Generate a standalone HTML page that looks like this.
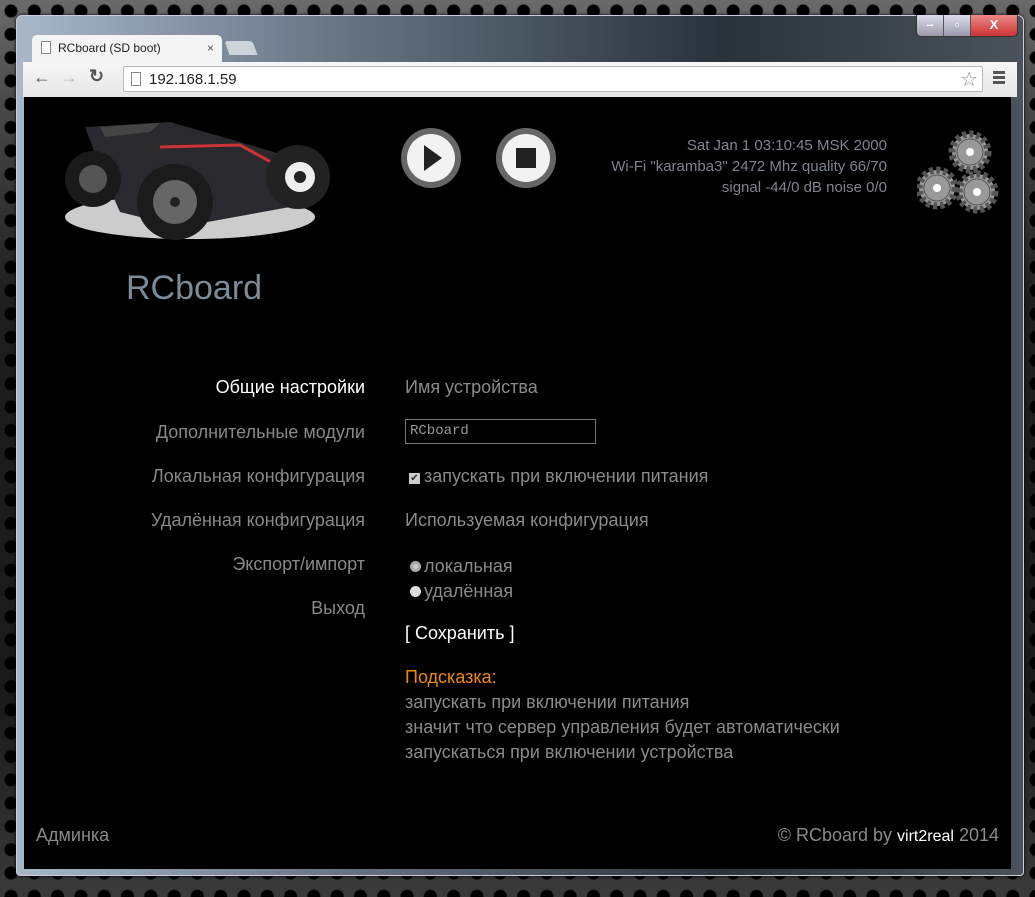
<!DOCTYPE html>
<html><head><meta charset="utf-8"><style>
*{margin:0;padding:0;box-sizing:border-box}
body{width:1035px;height:897px;overflow:hidden;position:relative;font-family:"Liberation Sans Narrow","Liberation Sans","Noto Sans CJK SC",sans-serif;
background:radial-gradient(circle at 11px 11px,#000 0 6px,transparent 7px) 0 0/23.3px 23.3px,linear-gradient(180deg,#6a6a6a 0,#4a4a4a 100px,#1e1e1e 300px,#1a1a1a 700px,#3a3a3a 897px);}
.win{position:absolute;left:16px;top:15px;width:1008px;height:861px;border-radius:6px 6px 4px 4px;border:1px solid #ccd;
background:linear-gradient(90deg,#a8b8c8 0,#6a7888 30%,#2a323c 70%,#4a525c 100%);box-shadow:0 0 3px #000}
.ctl{position:absolute;top:-1px;right:5px;height:22px;display:flex;border:1px solid #333;border-top:none;border-radius:0 0 5px 5px;overflow:hidden}
.ctl div{width:27px;height:21px;background:linear-gradient(#dde,#99a);color:#fff;font:bold 13px "Liberation Sans";text-align:center;line-height:20px;border-right:1px solid #555}
.ctl div.x{width:46px;background:linear-gradient(#e88,#c33);border:none}
.tab{position:absolute;left:15px;top:19px;width:190px;height:28px;background:#f4f4f4;border-radius:5px 5px 0 0;font:12px "Liberation Sans";color:#222;padding:6px 0 0 26px}
.tab2{position:absolute;left:210px;top:25px;width:28px;height:14px;background:#ccd3da;border-radius:3px 3px 0 0;transform:skewX(20deg)}
.bar{position:absolute;left:6px;top:46px;width:994px;height:35px;background:linear-gradient(#f6f6f6,#e6e6e6)}
.url{position:absolute;left:100px;top:4px;width:860px;height:26px;background:#fff;border:1px solid #bbb;border-radius:2px;font:15px "Liberation Sans";color:#222;padding:4px 0 0 25px}
.content{position:absolute;left:7px;top:81px;width:987px;height:772px;background:#000}
.gray{color:#8a8a8a}
.menu{position:absolute;right:646px;text-align:right;font-size:18px;color:#888;white-space:nowrap}
.t{position:absolute;white-space:nowrap}
</style></head><body>
<div class="win">
 <div class="ctl"><div>–</div><div>▫</div><div class="x">X</div></div>
 <div class="tab"><span style="position:absolute;left:9px;top:6px;width:10px;height:13px;border:1px solid #888;background:#fff"></span>RCboard (SD boot)<span style="position:absolute;right:8px;top:6px;color:#555">×</span></div>
 <div class="tab2"></div>
 <div class="bar">
  <span style="position:absolute;left:10px;top:5px;font:bold 18px 'Liberation Sans';color:#555">←</span>
  <span style="position:absolute;left:37px;top:5px;font:bold 18px 'Liberation Sans';color:#bbb">→</span>
  <span style="position:absolute;left:66px;top:4px;font:bold 18px 'Liberation Sans';color:#555">↻</span>
  <div class="url"><span style="position:absolute;left:7px;top:5px;width:10px;height:14px;border:1px solid #888"></span>192.168.1.59<span style="position:absolute;right:4px;top:0;font-size:20px;color:#888">☆</span></div>
  <span style="position:absolute;left:970px;top:9px;width:12px;height:3px;background:#555;box-shadow:0 5px #555,0 10px #555"></span>
 </div>
 <div class="content">
  <svg style="position:absolute;left:36px;top:20px" width="280" height="135" viewBox="0 0 280 135">
   <ellipse cx="130" cy="100" rx="125" ry="22" fill="#ccc"/>
   <path d="M25 10 L110 5 L180 25 L230 40 L240 60 L230 90 L120 110 L60 95 L40 50 Z" fill="#2a2a2e"/>
   <path d="M40 10 L100 6 L90 15 L45 20Z" fill="#444"/>
   <path d="M100 30 L180 28 L220 50" stroke="#c33" stroke-width="3" fill="none"/>
   <circle cx="33" cy="62" r="28" fill="#1a1a1a"/><circle cx="33" cy="62" r="14" fill="#555"/>
   <circle cx="115" cy="85" r="38" fill="#1b1b1b"/><circle cx="115" cy="85" r="22" fill="#666"/><circle cx="115" cy="85" r="5" fill="#222"/>
   <circle cx="238" cy="60" r="32" fill="#222"/><circle cx="240" cy="60" r="15" fill="#eee"/><circle cx="240" cy="60" r="6" fill="#222"/>
  </svg>
  <div class="t" style="left:102px;top:172px;font-size:34px;color:#7d8a98">RCboard</div>
  <svg style="position:absolute;left:376px;top:30px" width="62" height="62"><circle cx="31" cy="31" r="30" fill="#666"/><circle cx="31" cy="31" r="24" fill="#f2f2f2"/><path d="M24 18 L42 31 L24 44Z" fill="#222"/></svg>
  <svg style="position:absolute;left:471px;top:30px" width="62" height="62"><circle cx="31" cy="31" r="30" fill="#666"/><circle cx="31" cy="31" r="24" fill="#f2f2f2"/><rect x="21" y="21" width="20" height="20" fill="#222"/></svg>
  <div class="t" style="right:124px;top:38px;text-align:right;font-size:15px;line-height:21px;color:#7d8390">Sat Jan 1 03:10:45 MSK 2000<br>Wi-Fi "karamba3" 2472 Mhz quality 66/70<br>signal -44/0 dB noise 0/0</div>
  <svg style="position:absolute;left:893px;top:33px" width="85" height="85">
   <g fill="#999" stroke="#555"><circle cx="53" cy="22" r="18" stroke-dasharray="4 3" stroke-width="7"/><circle cx="53" cy="22" r="13"/>
   <circle cx="20" cy="58" r="18" stroke-dasharray="4 3" stroke-width="7"/><circle cx="20" cy="58" r="13"/>
   <circle cx="60" cy="62" r="18" stroke-dasharray="4 3" stroke-width="7"/><circle cx="60" cy="62" r="13"/></g>
   <g fill="#fff"><circle cx="53" cy="22" r="4"/><circle cx="20" cy="58" r="4"/><circle cx="60" cy="62" r="4"/></g>
  </svg>
  <div class="menu" style="top:280px;color:#fff">Общие настройки</div>
  <div class="menu" style="top:325px">Дополнительные модули</div>
  <div class="menu" style="top:369px">Локальная конфигурация</div>
  <div class="menu" style="top:413px">Удалённая конфигурация</div>
  <div class="menu" style="top:457px">Экспорт/импорт</div>
  <div class="menu" style="top:501px">Выход</div>
  <div class="t gray" style="left:381px;top:280px;font-size:18px">Имя устройства</div>
  <div class="t" style="left:381px;top:322px;width:191px;height:25px;border:1px solid #777;font:14px 'Liberation Mono';color:#999;padding:3px 4px">RCboard</div>
  <div class="t gray" style="left:385px;top:369px;font-size:18px"><span style="display:inline-block;width:11px;height:11px;background:#ccc;margin-right:4px;vertical-align:1px;font-size:10px;line-height:11px;color:#333;text-align:center">✔</span>запускать при включении питания</div>
  <div class="t gray" style="left:381px;top:413px;font-size:18px">Используемая конфигурация</div>
  <div class="t gray" style="left:386px;top:457px;font-size:18px;line-height:25px"><span style="display:inline-block;width:11px;height:11px;border-radius:50%;background:#ccc;border:3px solid #aaa;margin-right:3px"></span>локальная<br><span style="display:inline-block;width:11px;height:11px;border-radius:50%;background:#ddd;margin-right:3px"></span>удалённая</div>
  <div class="t" style="left:381px;top:526px;font-size:18px;color:#fff">[ Сохранить ]</div>
  <div class="t" style="left:381px;top:568px;font-size:18px;line-height:25px;color:#8a8a8a"><span style="color:#f08a00">Подсказка:</span><br>запускать при включении питания<br>значит что сервер управления будет автоматически<br>запускаться при включении устройства</div>
  <div class="t gray" style="left:12px;top:728px;font-size:18px">Админка</div>
  <div class="t gray" style="right:12px;top:728px;font-size:18px">© RCboard by <span style="color:#fff;font-size:16px">virt2real</span> 2014</div>
 </div>
</div>
</body></html>
